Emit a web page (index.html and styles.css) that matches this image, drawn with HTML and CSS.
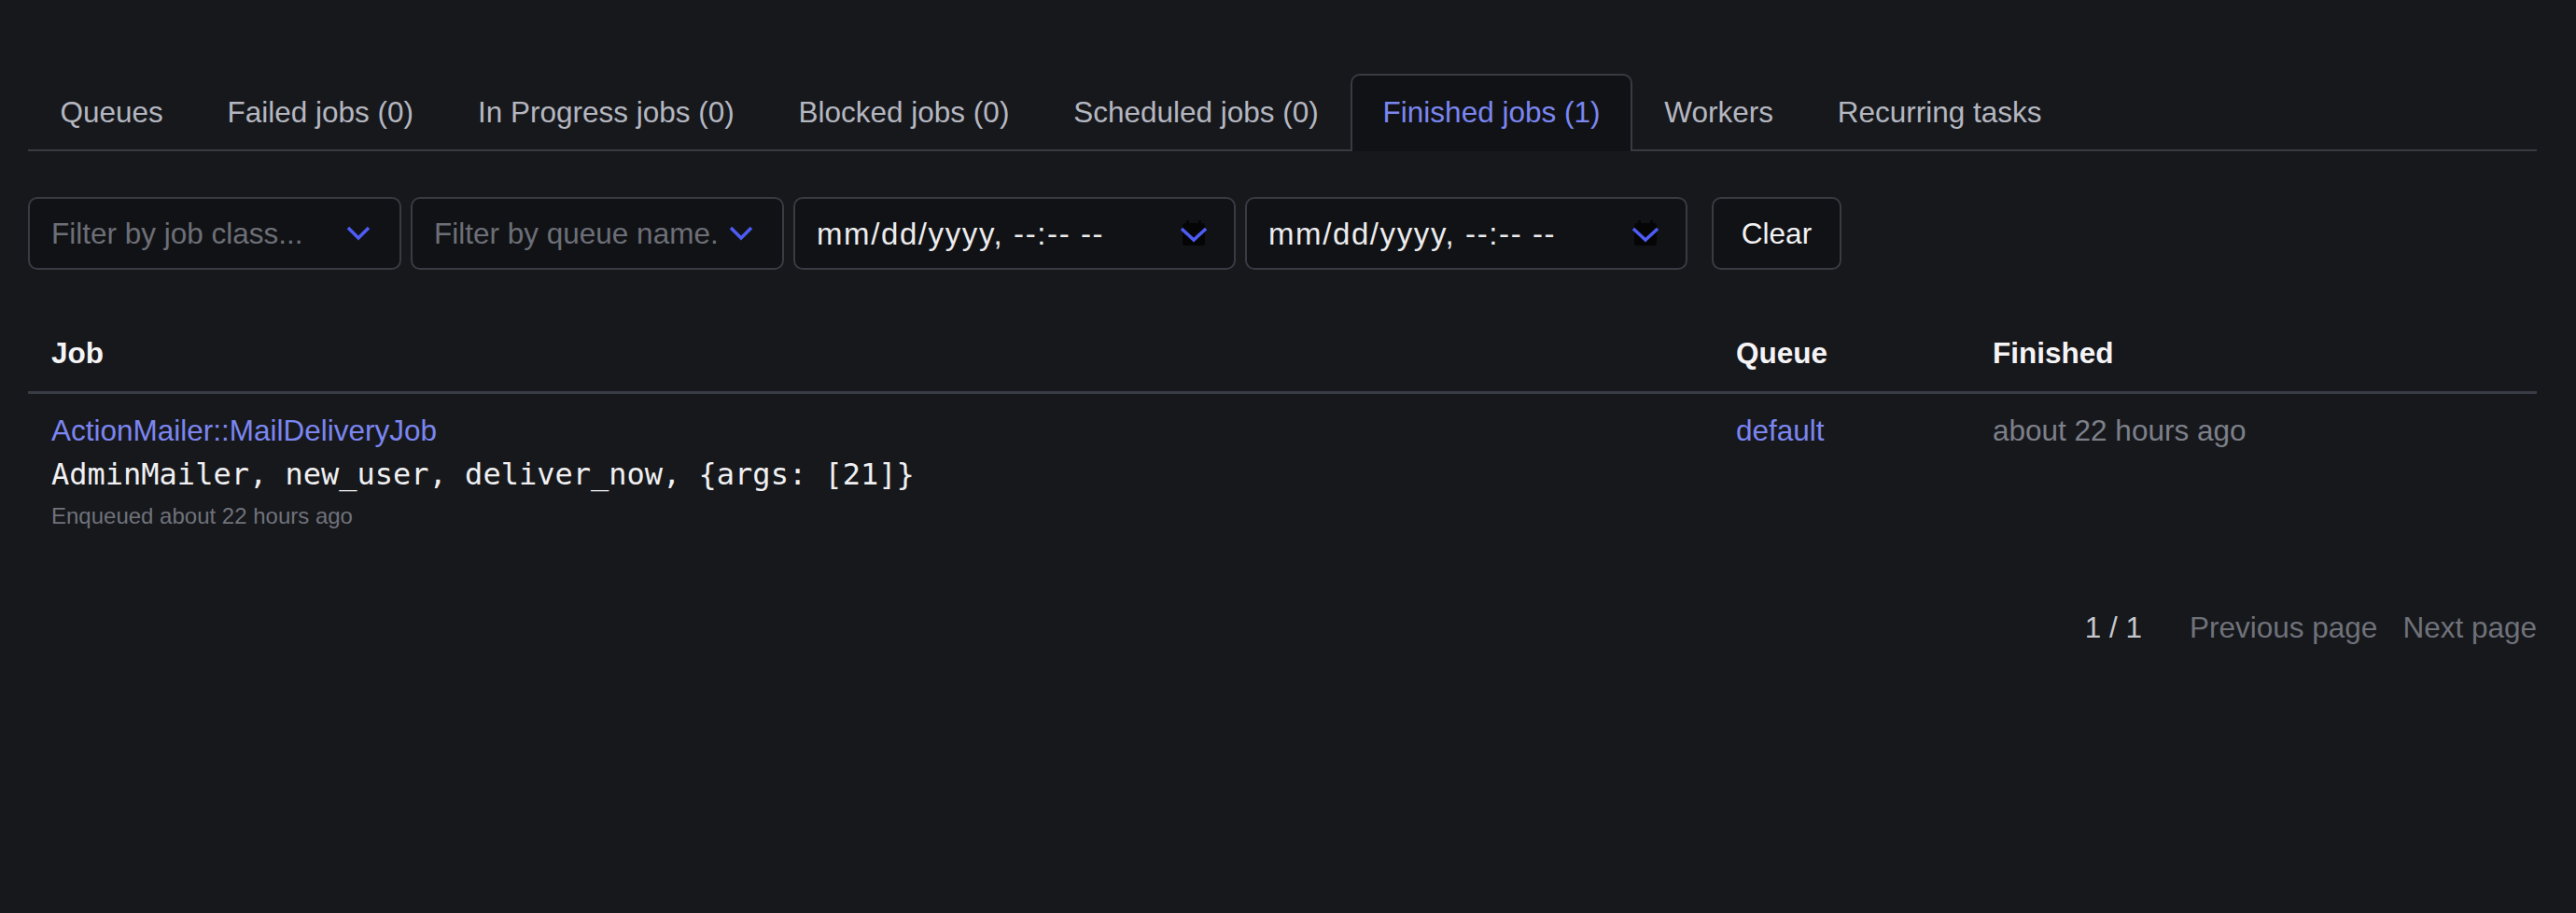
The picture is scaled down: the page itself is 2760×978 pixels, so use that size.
FILE: index.html
```html
<!DOCTYPE html>
<html lang="en">
<head>
    <meta charset="UTF-8">
    <meta name="viewport" content="width=device-width, initial-scale=1.0">
    <title>Finished jobs</title>
    <link rel="stylesheet" href="styles.css">
</head>
<body>
    <div class="page">
        <nav class="tabs">
            <a class="tab" href="#">Queues</a>
            <a class="tab" href="#">Failed jobs (0)</a>
            <a class="tab" href="#">In Progress jobs (0)</a>
            <a class="tab" href="#">Blocked jobs (0)</a>
            <a class="tab" href="#">Scheduled jobs (0)</a>
            <a class="tab active" href="#">Finished jobs (1)</a>
            <a class="tab" href="#">Workers</a>
            <a class="tab" href="#">Recurring tasks</a>
        </nav>

        <div class="filters">
            <div class="field select">
                <span class="placeholder">Filter by job class...</span>
                <svg class="chevron" width="28" height="18" viewBox="0 0 28 18"><path d="M3 3 L14 14 L25 3" fill="none" stroke="#4d5cf5" stroke-width="3.5"/></svg>
            </div>
            <div class="field select">
                <span class="placeholder">Filter by queue name.</span>
                <svg class="chevron" width="28" height="18" viewBox="0 0 28 18"><path d="M3 3 L14 14 L25 3" fill="none" stroke="#4d5cf5" stroke-width="3.5"/></svg>
            </div>
            <div class="field date">
                <span class="value">mm/dd/yyyy, --:-- --</span>
                <svg class="picker" width="28" height="28" viewBox="0 0 28 28"><rect x="2" y="3" width="24" height="24" rx="3" fill="#050506"/><rect x="6" y="0" width="3" height="5" fill="#050506"/><rect x="19" y="0" width="3" height="5" fill="#050506"/><path d="M1 9 L14 21 L27 9" fill="none" stroke="#4d5cf5" stroke-width="3.5"/></svg>
            </div>
            <div class="field date">
                <span class="value">mm/dd/yyyy, --:-- --</span>
                <svg class="picker" width="28" height="28" viewBox="0 0 28 28"><rect x="2" y="3" width="24" height="24" rx="3" fill="#050506"/><rect x="6" y="0" width="3" height="5" fill="#050506"/><rect x="19" y="0" width="3" height="5" fill="#050506"/><path d="M1 9 L14 21 L27 9" fill="none" stroke="#4d5cf5" stroke-width="3.5"/></svg>
            </div>
            <button class="clear" type="button">Clear</button>
        </div>

        <table class="jobs">
            <colgroup>
                <col>
                <col class="col-queue">
                <col class="col-finished">
            </colgroup>
            <thead>
                <tr>
                    <th>Job</th>
                    <th>Queue</th>
                    <th>Finished</th>
                </tr>
            </thead>
            <tbody>
                <tr>
                    <td>
                        <a class="link" href="#">ActionMailer::MailDeliveryJob</a>
                        <div class="args">AdminMailer, new_user, deliver_now, {args: [21]}</div>
                        <div class="meta">Enqueued about 22 hours ago</div>
                    </td>
                    <td><a class="link" href="#">default</a></td>
                    <td class="muted">about 22 hours ago</td>
                </tr>
            </tbody>
        </table>

        <div class="pagination">
            <span class="count">1 / 1</span>
            <span class="page-link">Previous page</span>
            <span class="page-link">Next page</span>
        </div>
    </div>
</body>
</html>
```

FILE: styles.css
```css
body {
    margin: 0;
    background: #17181c;
    color: #e8e8ea;
    font-family: "Liberation Sans", Helvetica, Arial, sans-serif;
    font-size: 31.5px;
    line-height: 47px;
}
.page {
    padding: 79px 42px 0 30px;
}

/* tabs */
.tabs {
    display: flex;
    border-bottom: 2px solid #393b43;
}
.tab {
    padding: 16px 32.4px;
    border: 2px solid transparent;
    border-bottom: none;
    border-radius: 10px 10px 0 0;
    color: #b4b7c0;
    text-decoration: none;
}
.tab.active {
    background: #111215;
    border-color: #393b43;
    color: #7b86f0;
    margin-bottom: -2px;
    padding-bottom: 18px;
}

/* filters */
.filters {
    display: flex;
    gap: 10px;
    margin-top: 49px;
}
.field {
    box-sizing: border-box;
    height: 78px;
    display: flex;
    align-items: center;
    justify-content: space-between;
    padding: 0 29px 0 23px;
    background: #111215;
    border: 2px solid #393b43;
    border-radius: 10px;
}
.select {
    width: 400px;
    padding-right: 30px;
}
.date {
    width: 474px;
}
.placeholder {
    color: #6c6f77;
    white-space: nowrap;
}
.chevron {
    flex-shrink: 0;
}
.value {
    color: #ececee;
    font-size: 33px;
    letter-spacing: 1.6px;
}
.clear {
    box-sizing: border-box;
    height: 78px;
    width: 139px;
    margin-left: 16px;
    background: #111215;
    border: 2px solid #393b43;
    border-radius: 10px;
    color: #f2f2f4;
    font: inherit;
}

/* table */
.jobs {
    width: 100%;
    margin-top: 50px;
    border-collapse: collapse;
}
.col-queue {
    width: 275px;
}
.col-finished {
    width: 608px;
}
.jobs th {
    text-align: left;
    font-weight: bold;
    color: #f4f4f6;
    padding: 16px 25px 17px;
    border-bottom: 3px solid #393b45;
}
.jobs td {
    vertical-align: top;
    padding: 16px 25px 16px;
}
.link {
    color: #7b86f0;
    text-decoration: none;
}
.args {
    font-family: "DejaVu Sans Mono", Menlo, monospace;
    font-size: 32px;
    color: #f0f0f2;
}
.meta {
    margin-top: 3px;
    font-size: 24px;
    line-height: 36px;
    color: #6f727b;
}
.muted {
    color: #7d808a;
}

/* pagination */
.pagination {
    display: flex;
    justify-content: flex-end;
    margin-top: 62px;
}
.count {
    color: #c5c7cc;
    margin-right: 24px;
}
.page-link {
    color: #6f727a;
    margin-left: 27px;
}
```
